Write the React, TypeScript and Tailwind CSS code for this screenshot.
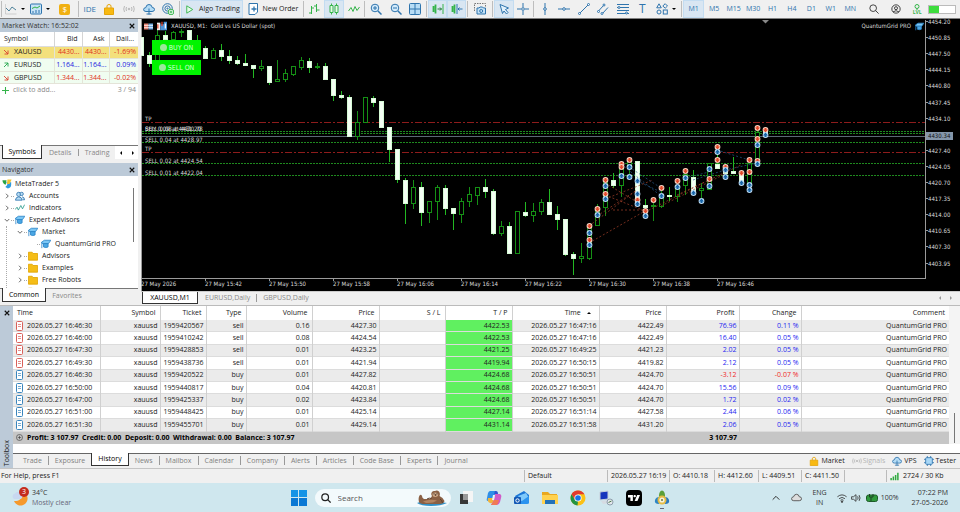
import type { ReactNode } from 'react'
import clsx from 'clsx'
import { SiTradingview } from 'react-icons/si'

// [body top, body bottom, wick top, wick bottom, filled], one bar every 8px
const candles: [number, number, number, number, number][] = [
  [37, 55, 37, 55, 1], [55, 63, 52, 67, 1], [35, 60, 29, 60, 0], [35, 39, 31, 39, 1],
  [32, 39, 31, 41, 0], [31, 32, 29, 37, 0], [30, 42, 30, 42, 1], [40, 50, 35, 52, 1],
  [48, 58, 46, 58, 1], [50, 58, 48, 58, 0], [50, 56, 44, 61, 1], [56, 60, 50, 64, 1],
  [60, 63, 56, 65, 1], [63, 65, 54, 66, 1], [65, 68, 65, 78, 1], [66, 68, 60, 71, 0],
  [66, 82, 66, 85, 1], [79, 81, 60, 81, 0], [73, 79, 69, 82, 0], [66, 74, 66, 76, 0],
  [60, 67, 57, 70, 0], [61, 67, 58, 73, 1], [66, 67, 63, 69, 0], [66, 79, 63, 79, 1],
  [79, 95, 79, 101, 1], [95, 97, 91, 99, 1], [97, 136, 95, 137, 1], [122, 136, 111, 140, 0],
  [97, 122, 97, 122, 0], [98, 102, 96, 107, 1], [101, 127, 101, 127, 1], [127, 149, 127, 162, 1],
  [149, 179, 149, 183, 1], [180, 203, 178, 224, 1], [187, 203, 180, 209, 0], [187, 212, 182, 226, 1],
  [201, 212, 201, 223, 0], [187, 201, 185, 220, 0], [188, 208, 185, 215, 1], [208, 213, 208, 230, 1],
  [201, 214, 198, 223, 0], [194, 201, 187, 207, 0], [187, 195, 187, 205, 0], [187, 191, 179, 198, 1],
  [191, 233, 189, 235, 1], [226, 233, 221, 236, 0], [226, 253, 222, 254, 1], [211, 253, 211, 253, 0],
  [212, 215, 202, 217, 1], [211, 215, 203, 222, 0], [202, 211, 199, 215, 0], [202, 214, 189, 214, 1],
  [214, 219, 206, 230, 1], [219, 254, 219, 256, 1], [254, 258, 252, 275, 1], [256, 258, 243, 263, 0],
  [225, 258, 225, 260, 0], [207, 225, 204, 226, 0], [179, 207, 179, 216, 0], [180, 185, 173, 188, 1],
  [163, 185, 161, 197, 0], [159, 168, 157, 178, 0], [161, 203, 161, 206, 1], [205, 207, 199, 210, 1],
  [205, 206, 199, 221, 0], [195, 206, 190, 208, 0], [195, 196, 187, 201, 1], [185, 196, 182, 202, 0],
  [174, 185, 172, 195, 0], [177, 191, 170, 191, 1], [188, 190, 183, 199, 0], [163, 189, 163, 190, 0],
  [164, 168, 145, 169, 1], [170, 173, 166, 178, 1], [171, 173, 157, 174, 1], [173, 183, 172, 183, 1],
  [163, 185, 158, 188, 0], [132, 163, 130, 165, 0], [131, 135, 129, 137, 1],
]

const marks: [number, string][] = [
  [589, 'r226 b233 r240 b245'], [597, 'r209 b215'], [605, 'r180 b186 r194 b199'],
  [621, 'r164 r167 b176'], [629, 'r160 b167 b177'], [637, 'b181 b194 r200 b204'],
  [645, 'r211 b216'], [653, 'r200'], [661, 'r188 b196'], [677, 'r181 b187'],
  [685, 'r171 b178'], [693, 'b193'], [701, 'b201'], [709, 'b169 r179 b186'],
  [717, 'r147 b152 r160'], [725, 'r167 b170 b177'], [741, 'r173 b183'],
  [749, 'r160 r172 b185 b190'], [757, 'r128 r139 b145 r161 b164'], [765, 'r130 b135'],
]

const prices = [
  '4454.20', '4450.85', '4447.50', '4444.15', '4440.80', '4437.45', '4434.10', '', '4427.40',
  '4424.05', '4420.70', '4417.35', '4414.00', '4410.65', '4407.30', '4403.95',
]

const times = [
  '27 May 2026', '27 May 15:42', '27 May 15:50', '27 May 15:58', '27 May 16:06',
  '27 May 16:14', '27 May 16:22', '27 May 16:30', '27 May 16:38', '27 May 16:46',
]

const levels: [string, number][] = [
  ['TP', 121], ['BUY 0.09 at 4431.20', 131], ['SELL 0.08 at 4430.78', 131], ['SELL 0.04 at 4428.97', 142],
  ['TP', 151], ['SELL 0.02 at 4424.54', 163], ['SELL 0.01 at 4422.04', 175],
]

const deals = [
  ['2026.05.27 16:46:30', '1959420567', 'sell', '0.16', '4427.30', '4422.53', '2026.05.27 16:47:16', '4422.49', '76.96', '0.11 %'],
  ['2026.05.27 16:46:00', '1959410242', 'sell', '0.08', '4424.54', '4422.53', '2026.05.27 16:47:16', '4422.49', '16.40', '0.05 %'],
  ['2026.05.27 16:47:30', '1959428853', 'sell', '0.01', '4423.25', '4421.25', '2026.05.27 16:49:25', '4421.23', '2.02', '0.05 %'],
  ['2026.05.27 16:49:30', '1959438736', 'sell', '0.01', '4421.94', '4419.94', '2026.05.27 16:50:15', '4419.82', '2.12', '0.05 %'],
  ['2026.05.27 16:46:30', '1959420522', 'buy', '0.01', '4427.82', '4424.68', '2026.05.27 16:50:51', '4424.70', '-3.12', '-0.07 %'],
  ['2026.05.27 16:50:00', '1959440817', 'buy', '0.04', '4420.81', '4424.68', '2026.05.27 16:50:51', '4424.70', '15.56', '0.09 %'],
  ['2026.05.27 16:47:00', '1959425337', 'buy', '0.02', '4423.84', '4424.68', '2026.05.27 16:50:51', '4424.70', '1.72', '0.02 %'],
  ['2026.05.27 16:51:00', '1959448425', 'buy', '0.01', '4425.14', '4427.14', '2026.05.27 16:51:14', '4427.58', '2.44', '0.06 %'],
  ['2026.05.27 16:51:30', '1959455701', 'buy', '0.01', '4429.14', '4431.14', '2026.05.27 16:51:58', '4431.20', '2.06', '0.05 %'],
]

const BLUE = '#2f74ad'
const GREEN = '#35b44a'

function Icon({ size = 12, color = BLUE, children }: { size?: number; color?: string; children: ReactNode }) {
  return (
    <svg width={size} height={size} viewBox="0 0 12 12" fill="none" stroke={color} className="shrink-0" aria-hidden="true">
      {children}
    </svg>
  )
}

const Cap = ({ size = 10 }: { size?: number }) => (
  <Icon size={size} color="#2b86c9">
    <path d="M.5 4L4 1.500H11.800L9 5.500H1.500z" fill="#7cc7f5" />
    <path d="M3 5.500V9.500Q6 11 8.500 9.500V5.500z" fill="#4ba7e4" />
    <path d="M1 4V11" />
  </Icon>
)

const Folder = () => (
  <Icon size={10} color="#e0a400">
    <path d="M.5 1.500H5L6 3H11.500V11H.5z" fill="#f5bd16" />
  </Icon>
)

const Bag = ({ size = 12 }: { size?: number }) => (
  <Icon size={size} color="#e5a50a">
    <path d="M1.500 5H10.500V11.500H1.500z" fill="#f8b912" />
    <path d="M4 5V2.500Q6 .2 8 2.500V5" />
  </Icon>
)

const Signal = ({ size = 12 }: { size?: number }) => (
  <Icon size={size} color="#b9b9b9">
    <path d="M1.500 3Q0 6 1.500 9M3.500 4Q2.500 6 3.500 8M8.500 4Q9.500 6 8.500 8M10.500 3Q12 6 10.500 9" />
    <circle cx="6" cy="6" r=".8" fill="#b9b9b9" />
  </Icon>
)

const Cloud = ({ size = 12 }: { size?: number }) => (
  <Icon size={size}>
    <path d="M3 8.500Q.6 8.500.6 6.500.6 4.800 2.800 4.600 3.200 1.500 6 1.500T9.200 4.500Q11.500 4.500 11.500 6.500T9 8.500z" fill="#b5dcf5" />
    <path d="M6 5.500V11.500M3.500 11H8.500" />
  </Icon>
)

const Magnifier = ({ sign }: { sign: string }) => (
  <Icon>
    <circle cx="5" cy="5" r="3.800" fill="#d4ebfb" />
    <path d={sign} />
    <path d="M8 8L11.500 11.500" strokeWidth="1.500" />
  </Icon>
)

function Tool({ label, active, children }: { label: string; active?: boolean; children: ReactNode }) {
  return (
    <button
      aria-label={label}
      className={clsx('flex h-full flex-1 items-center justify-center gap-1', active && 'border border-[#c3dcf1] bg-[#d9e6f2]')}
    >
      {children}
    </button>
  )
}

const Caret = () => <span className="border-x-2 border-t-2 border-x-transparent border-t-black" />
const Sep = () => <span className="mx-px h-4 w-px shrink-0 bg-[#bdbdbd]" />

function Toolbar() {
  return (
    <header className="flex h-[18px] items-center bg-[#f0f0f0] text-[7px] whitespace-nowrap text-[#222]">
      <Sep />
      <div className="flex h-full w-[74px]">
        <Tool label="Line chart">
          <Icon color="#4d8199"><path d="M1 5L4 8 7 4 11 7" /><path d="M.5 1V11H11.500" stroke="#bbb" strokeWidth=".6" /></Icon>
          <Caret />
        </Tool>
        <Tool label="Chart window">
          <Icon><rect x=".5" y="1" width="11" height="10" rx="1" fill="#c8e3f7" /><path d="M2 5.500L5 4 7 5 10 3" stroke={GREEN} /><path d="M3 10V8M6 10V7M9 10V7" /></Icon>
          <Caret />
        </Tool>
        <Tool label="Deposit">
          <span className="flex h-[11px] w-[11px] items-center justify-center rounded-xs bg-[#f0b012] text-[8px] text-white">$</span>
        </Tool>
      </div>
      <Sep />
      <div className="flex h-full w-[98px]">
        <Tool label="MetaEditor"><span className="text-[8px] text-[#2f74ad]">IDE</span></Tool>
        <Tool label="Market"><Bag /></Tool>
        <Tool label="Signals"><Signal /></Tool>
        <Tool label="Virtual hosting"><Cloud /></Tool>
        <Tool label="Community">
          <Icon><circle cx="5.500" cy="5.500" r="4.800" /><circle cx="5.500" cy="5.500" r="2.600" /><circle cx="5.500" cy="5.500" r=".6" /><circle cx="9" cy="9" r="2.800" fill="#fff" stroke={GREEN} /><path d="M9 7.500V10.500M7.500 9H10.500" stroke={GREEN} /></Icon>
        </Tool>
      </div>
      <Sep />
      <div className="flex h-full w-[62px]">
        <Tool label="Algo Trading" active>
          <Icon color={GREEN} size={11}><path d="M3 2V10L9.500 6z" fill="#e7fbe9" /></Icon>
          Algo Trading
        </Tool>
      </div>
      <div className="flex h-full w-[59px]">
        <Tool label="New Order">
          <Icon><path d="M2 .5H10.500V9L8 11.500H2z" fill="#fff" /><path d="M4.500 6H9.500M7 3.500V8.500" strokeWidth="1.300" /></Icon>
          New Order
        </Tool>
      </div>
      <Sep />
      <div className="flex h-full w-[58px]">
        <Tool label="Bar chart"><Icon color={GREEN}><path d="M3.500 3V11M1 10H3.500M3.500 5H6M8.500 1V9M6 3H8.500M8.500 7H11.500" /></Icon></Tool>
        <Tool label="Candles" active><Icon color={GREEN}><path d="M3.500.5V11.500M8.500.5V11.500" /><path d="M2 2.500H5V9.500H2zM7 2.500H10V9.500H7z" fill="#e7fbe9" /></Icon></Tool>
        <Tool label="Line"><Icon color={GREEN}><path d="M.5 8L3 4.500 5 8.500 7 3.500 9 7.500 11.500 4" /></Icon></Tool>
      </div>
      <Sep />
      <div className="flex h-full w-[59px]">
        <Tool label="Zoom in"><Magnifier sign="M3 5H7M5 3V7" /></Tool>
        <Tool label="Zoom out"><Magnifier sign="M3 5H7" /></Tool>
        <Tool label="Tile windows"><Icon><rect x=".5" y=".5" width="11" height="11" rx="1" fill="#b8ddf5" /><path d="M6 .5V11.500M.5 6H11.500" /></Icon></Tool>
      </div>
      <Sep />
      <div className="flex h-full w-[38px]">
        <Tool label="Auto scroll" active><Icon color={GREEN}><path d="M1.500 3V9M3.500 1.500V10.500" strokeWidth="1.800" /><path d="M5.500 6H9.500M8 4.500L9.500 6 8 7.500" stroke="#247c36" /><path d="M11 1V11" /></Icon></Tool>
        <Tool label="Chart shift" active><Icon color={GREEN}><path d="M1.500 3V9M3.500 1.500V10.500" strokeWidth="1.800" /><path d="M11.500 6H7M8.500 4.500L7 6 8.500 7.500M6 1V11" stroke={BLUE} /></Icon></Tool>
      </div>
      <Sep />
      <div className="flex h-full w-[22px]">
        <Tool label="Screenshot"><Icon><path d="M.5 8V.5H11.500V4" stroke="#777" strokeDasharray="1.500 1" /><path d="M3 5H5L6 4H8.500L9.500 5H11.500V11H3z" fill="#c3e1f6" /><circle cx="7.200" cy="8" r="1.500" /></Icon></Tool>
      </div>
      <Sep />
      <div className="flex h-full w-[38px]">
        <Tool label="Cursor" active><Icon><path d="M2 1.500L10.500 5 7.500 6.500 10 9.500 8.500 11 6 8 4.500 10.500z" fill="#e1f1fc" /></Icon></Tool>
        <Tool label="Crosshair"><Icon><path d="M6 0V12M0 6H12" /><rect x="5" y="5" width="2" height="2" fill="#f0f0f0" strokeWidth=".6" /></Icon></Tool>
      </div>
      <Sep />
      <div className="flex h-full w-[117px]">
        <Tool label="Vertical line"><Icon><path d="M6 0V12" /><circle cx="6" cy="6" r="1.300" fill="#fff" /></Icon></Tool>
        <Tool label="Horizontal line"><Icon><path d="M0 6H12" /><circle cx="6" cy="6" r="1.300" fill="#fff" /></Icon></Tool>
        <Tool label="Trendline"><Icon><path d="M1.500 10.500L10.500 1.500" /><circle cx="1.500" cy="10.500" r="1" fill="#fff" /><circle cx="10.500" cy="1.500" r="1" fill="#fff" /></Icon></Tool>
        <Tool label="Channel"><Icon><path d="M1 8.500L7 2M5 11L11 4.500" /><circle cx="1.500" cy="8.500" r="1" fill="#fff" /><circle cx="7" cy="2" r="1" fill="#fff" /><circle cx="5" cy="10.500" r="1" fill="#fff" /></Icon></Tool>
        <Tool label="Fibonacci"><Icon><path d="M0 1.500H12M0 4.500H12M0 7.500H12M0 10.500H12" /><circle cx="9.500" cy="10" r="1" fill="#fff" /><circle cx="2" cy="4.500" r="1" fill="#fff" /></Icon></Tool>
        <Tool label="Text"><span className="text-[12px] leading-3 text-[#2f74ad]">T</span></Tool>
      </div>
      <div className="flex h-full w-[28px]">
        <Tool label="Objects">
          <Icon><path d="M3 .8L5.300 4.800H.7zM6.800 3L9.200.7 11.500 3 9.200 5.200z" /><circle cx="3" cy="9" r="2" /><rect x="7.300" y="7" width="4" height="4" /></Icon>
          <Caret />
        </Tool>
      </div>
      <Sep />
      <div className="flex h-full w-[177px] text-[#2f74ad]">
        {['M1', 'M5', 'M15', 'M30', 'H1', 'H4', 'D1', 'W1', 'MN'].map((tf) => (
          <Tool key={tf} label={tf} active={tf === 'M1'}>
            <span className="w-0 flex-1 text-center">{tf}</span>
          </Tool>
        ))}
      </div>
      <div className="ml-[3px] flex h-full w-[65px]">
        <Tool label="Search"><Icon size={10} color="#222"><circle cx="5" cy="5" r="4" /><path d="M8 8L11.500 11.500" /></Icon></Tool>
        <Tool label="Account"><Icon size={10} color="#222"><circle cx="6" cy="6" r="5" /><circle cx="6" cy="5" r="1.800" /><path d="M2.500 9.500Q6 6.500 9.500 9.500" /></Icon></Tool>
        <Tool label="Level">
          <span className="flex flex-col items-center text-[5px] leading-[5px] font-bold text-[#35b44a]">
            <Icon size={6} color={GREEN}><circle cx="6" cy="5" r="4" strokeWidth="2" /><path d="M6 9V12" strokeWidth="2" /></Icon>
            LVL
          </span>
        </Tool>
      </div>
      <div className="h-[9px] w-7 border border-[#bbb] bg-white">
        <div className="h-full w-2/5 bg-[#3ddc3d]" />
      </div>
    </header>
  )
}

function PanelTitle({ children }: { children: ReactNode }) {
  return (
    <div className="flex h-[13px] items-center justify-between bg-[#bccad8] pr-[3px] pl-[2px] text-[#333]">
      <h2>{children}</h2>
      <button aria-label="Close">
        <Icon size={6} color="#111"><path d="M1.500 1.500L10.500 10.500M10.500 1.500L1.500 10.500" strokeWidth="2.200" /></Icon>
      </button>
    </div>
  )
}

const activeTab = 'border border-t-0 border-[#333] bg-white text-black'

function MarketWatch() {
  const rows = [
    ['XAUUSD', '4430...', '4430...', '-1.69%'],
    ['EURUSD', '1.164...', '1.164...', '0.09%'],
    ['GBPUSD', '1.344...', '1.344...', '-0.02%'],
  ]
  return (
    <section className="flex flex-1 flex-col">
      <PanelTitle>Market Watch: 16:52:02</PanelTitle>
      <div className="flex-1 bg-white">
        <table className="h-16 w-full table-fixed text-right">
          <thead>
            <tr className="h-[14px] border-b border-[#ddd]">
              <th className="w-[54px] border-r border-[#d5d5d5] pl-1 text-left font-normal">Symbol</th>
              <th className="w-[28px] border-r border-[#d5d5d5] pr-1 font-normal">Bid</th>
              <th className="w-[27px] border-r border-[#d5d5d5] pr-1 font-normal">Ask</th>
              <th className="pr-1 font-normal">Dail...</th>
            </tr>
          </thead>
          <tbody>
            {rows.map(([symbol, bid, ask, daily], i) => {
              const up = symbol === 'EURUSD'
              return (
                <tr key={symbol} className={clsx('border-b border-[#e4e4d8]', i === 0 ? 'bg-[#f3e07c]' : 'bg-[#f0fdf0]', up ? 'text-[#2222e0]' : 'text-[#e0301e]')}>
                  <td className="border-r border-[#e4e4d8] pl-[3px] text-[#222]">
                    <span className="flex items-center gap-[5px]">
                      <Icon size={6} color={up ? '#1fa54a' : '#d8402c'}>
                        <path d={up ? 'M2 10L10 2M3 2H10V9' : 'M2 2L10 10M10 3V10H3'} strokeWidth="1.800" />
                      </Icon>
                      {symbol}
                    </span>
                  </td>
                  <td className="border-r border-[#e4e4d8] pr-[2px]">{bid}</td>
                  <td className="border-r border-[#e4e4d8] pr-[2px]">{ask}</td>
                  <td className="pr-[2px]">{daily}</td>
                </tr>
              )
            })}
            <tr className="text-[#888]">
              <td colSpan={2} className="pl-[2px] text-left">
                <span className="flex items-center gap-1">
                  <Icon size={7} color={GREEN}><path d="M6 0V12M0 6H12" strokeWidth="1.800" /></Icon>
                  click to add...
                </span>
              </td>
              <td colSpan={2} className="pr-[2px]">3 / 94</td>
            </tr>
          </tbody>
        </table>
      </div>
      <nav className="flex h-[14px] items-stretch border-t border-[#777] text-[#888]">
        <button className={clsx('-mt-px ml-[2px] w-[41px]', activeTab)}>Symbols</button>
        <button className="w-9">Details</button>
        <span className="my-[3px] w-px bg-[#999]" />
        <button className="w-[37px]">Trading</button>
        <button aria-label="Previous tabs" className="flex w-3 items-center justify-center bg-white">
          <span className="border-y-2 border-r-2 border-y-transparent border-r-black" />
        </button>
        <button aria-label="Next tabs" className="flex w-[11px] items-center justify-center bg-white">
          <span className="border-y-2 border-l-2 border-y-transparent border-l-black" />
        </button>
      </nav>
    </section>
  )
}

function TreeItem({ icon, open, leaf, children }: { icon: ReactNode; open?: boolean; leaf?: boolean; children?: ReactNode }) {
  return (
    <div className="flex h-3 items-center">
      <span className="flex w-[9px] justify-center">
        {!leaf && (
          <Icon size={6} color="#444">
            <path d={open ? 'M1.500 4L6 8.500 10.500 4' : 'M4 1.500L8.500 6 4 10.500'} strokeWidth="1.600" />
          </Icon>
        )}
      </span>
      <span className="mr-px w-[3px] border-t border-dotted border-[#aaa]" />
      {icon}
      <span className="ml-1 whitespace-nowrap">{children}</span>
    </div>
  )
}

function Navigator() {
  return (
    <section className="mt-1 flex h-[139px] flex-col">
      <PanelTitle>Navigator</PanelTitle>
      <div className="flex min-h-0 flex-1 justify-between overflow-hidden bg-white pt-[2px] pr-1 leading-3">
        <div>
          <div className="flex h-3 items-center gap-[3px] pl-[2px]">
            <Icon size={10}>
              <path d="M.5 1.500H5.500L4.500 7Q1 6 .5 1.500z" fill="#27a343" stroke="none" />
              <path d="M5 4H11V7Q11 11 7 11.500L4 9.500 6.500 7z" fill="#2e9be0" stroke="none" />
              <path d="M6.500.5H11.500L9 6H6z" fill="#f2c230" stroke="none" />
            </Icon>
            MetaTrader 5
          </div>
          <div className="pl-[2px]">
            <TreeItem icon={<Icon size={10}><circle cx="4.500" cy="4" r="2.500" fill="#b8ddf5" /><circle cx="8" cy="3.500" r="2" fill="#b8ddf5" /><path d="M.5 11Q1 7 4.500 7T8.500 11zM8.500 7Q11 7 11.500 10.500H9" fill="#b8ddf5" /></Icon>}>Accounts</TreeItem>
            <TreeItem icon={<Icon size={10} color="#2a9a8c"><path d="M0 8L2.500 5 4 8.500 7 3 9 7 11.500 2" /></Icon>}>Indicators</TreeItem>
            <TreeItem open icon={<Cap />}>Expert Advisors</TreeItem>
            <div className="ml-1 border-l border-dotted border-[#aaa] pl-2">
              <TreeItem open icon={<Cap />}>Market</TreeItem>
              <div className="ml-[13px]"><TreeItem leaf icon={<Cap />}>QuantumGrid PRO</TreeItem></div>
              <TreeItem icon={<Folder />}>Advisors</TreeItem>
              <TreeItem icon={<Folder />}>Examples</TreeItem>
              <TreeItem icon={<Folder />}>Free Robots</TreeItem>
              <TreeItem leaf icon={<Folder />} />
            </div>
          </div>
        </div>
        <span className="mt-[10px] h-[54px] w-px bg-[#777]" />
      </div>
      <nav className="flex h-[14px] border-t border-[#777] text-[#888]">
        <button className={clsx('-mt-px ml-[2px] w-11', activeTab)}>Common</button>
        <button className="w-[42px]">Favorites</button>
      </nav>
    </section>
  )
}

function Mark({ x, y, red }: { x: number; y: number; red: boolean }) {
  return (
    <g>
      <circle cx={x} cy={y} r="2.900" fill={red ? '#f9d3c2' : '#bcdcf5'} />
      <path
        d={red ? 'M-1 -2H1V-.5H2.500L0 2.500 -2.500 -.5H-1z' : 'M-1 2H1V.5H2.500L0 -2.500 -2.500 .5H-1z'}
        transform={`translate(${x} ${y})`}
        fill={red ? '#e2482a' : '#1765a8'}
      />
    </g>
  )
}

function Chart() {
  return (
    <div className="relative bg-black font-['DejaVu_Sans_Condensed','DejaVu_Sans',sans-serif]">
      <svg viewBox="141 19 819 272" className="block w-full text-[6px]" role="img" aria-label="XAUUSD M1 chart">
        <rect x="141" y="19" width="819" height="272" fill="#000" />
        <g strokeWidth="1" shapeRendering="crispEdges">
          <path d="M142 122.500H925M142 152.500H925" stroke="#8e1c1c" strokeDasharray="7 2 2 2" />
          <path d="M142 131.500H925M142 133.500H925M142 142.500H925M142 163.500H925M142 175.500H925" stroke="#1f8a1f" strokeDasharray="2 1" />
          <path d="M142 136.500H925" stroke="#5d6876" />
          <path d="M141.500 19V291M142 278.500H925.500V20" stroke="#9a9a9a" fill="none" />
        </g>
        <g shapeRendering="crispEdges">
          {candles.map(([top, bottom, high, low, filled], i) => {
            const x = 141.5 + i * 8
            return (
              <g key={i} stroke={filled ? '#22b822' : '#159015'}>
                <path d={`M${x} ${high}V${low}`} />
                <rect
                  x={x - 2}
                  y={top + 0.5}
                  width="4"
                  height={bottom - top}
                  fill={filled ? '#f4fff4' : '#000'}
                  stroke={filled ? '#d6fbd6' : '#159015'}
                />
              </g>
            )
          })}
        </g>
        <g fill="none" strokeDasharray="2 2" strokeWidth=".7">
          <path d="M589 243L645 211M597 216L637 190M605 199L653 180M605 183L637 202M605 195L645 211M613 210L645 210M589 226L637 190M661 206L725 174M645 212L709 180M677 195L741 165" stroke="#a5402a" />
          <path d="M621 164L661 196M629 167L661 188M637 181L661 192M693 180L725 170M717 150L749 160M685 178L709 172M725 170L757 163" stroke="#285a8c" />
        </g>
        {marks.map(([x, list]) =>
          list.split(' ').map((m) => <Mark key={x + m} x={x + 0.5} y={Number(m.slice(1))} red={m[0] === 'r'} />)
        )}
        <path d="M762 20H769L765.500 23.500z" fill="#888" />
        <g fill="#dcdcdc">
          {levels.map(([label, y], i) => (
            <text key={i} x="145" y={y}>{label}</text>
          ))}
          {prices.map((price, i) => (
            <g key={i}>
              <path d={`M925 ${Math.round(21 + i * 16.1) + 0.5}h3`} stroke="#9a9a9a" />
              <text x="928" y={Math.round(24 + i * 16.1)}>{price}</text>
            </g>
          ))}
          {times.map((time, i) => (
            <g key={time}>
              <path d={`M${141.5 + i * 64} 278v3`} stroke="#9a9a9a" />
              <text x={141 + i * 64} y="286">{time}</text>
            </g>
          ))}
        </g>
        <rect x="926" y="132" width="27" height="8" fill="#8496aa" />
        <text x="928" y="138" fill="#111">4430.34</text>
      </svg>
      <div className="absolute top-[2px] right-[36px] left-[3px] flex items-center gap-1 text-[6px] leading-[10px] text-[#dcdcdc]">
        <Icon size={9}><path d="M0 2H6V10H0z" fill="#e88070" stroke="none" /><path d="M6 2H12V10H6z" fill="#6ba8e0" stroke="none" /><path d="M0 4.500H12M0 7.500H12" stroke="#fff" /></Icon>
        <Icon size={10}><path d="M0 2H4V11H0z" fill="#f2f2f2" stroke="none" /><path d="M4 4H8V11H4zM8 1H12V11H8z" fill="#4f94d8" stroke="none" /><path d="M1 4V9M6 1V6" stroke="#e2442e" strokeWidth="1.500" /><path d="M10 3V9" stroke="#fff" strokeWidth="1.500" /></Icon>
        <span className="flex-1">XAUUSD, M1:&nbsp; Gold vs US Dollar (spot)</span>
        <span>QuantumGrid PRO</span>
        <Cap size={9} />
      </div>
      <div className="absolute top-[21px] left-[11px] flex w-[49px] flex-col gap-[5px] text-[7px] text-[#d5ffd5]">
        {['BUY ON', 'SELL ON'].map((label) => (
          <button key={label} className="flex h-[15px] items-center justify-center gap-[2px] bg-[#00f400]">
            <span className="size-[7px] rounded-full bg-[#9be89b]" />
            {label}
          </button>
        ))}
      </div>
    </div>
  )
}

function Toolbox() {
  const cell = 'border-r border-[#d0d0d0] pr-[2px]'
  const head = 'border-r border-[#d0d0d0] pr-1 font-normal'
  const tabs = ['Trade', 'Exposure', 'History', 'News', 'Mailbox', 'Calendar', 'Company', 'Alerts', 'Articles', 'Code Base', 'Experts', 'Journal']
  return (
    <section className="flex border-t border-[#bbb] bg-[#f0f0f0]">
      <div className="flex w-[13px] shrink-0 flex-col items-center justify-between bg-[#bccad8] pt-1 pb-[2px]">
        <button aria-label="Close">
          <Icon size={6} color="#111"><path d="M1.500 1.500L10.500 10.500M10.500 1.500L1.500 10.500" strokeWidth="2.200" /></Icon>
        </button>
        <h2 className="rotate-180 [writing-mode:vertical-rl]">Toolbox</h2>
      </div>
      <div className="min-w-0 flex-1">
        <div className="flex bg-white">
          <table className="h-[138px] w-full table-fixed text-right text-[7px] leading-[10px] text-[#222]">
            <thead>
              <tr className="h-[14px]">
                <th className="w-[87px] border-r border-[#d0d0d0] pl-1 text-left font-normal">Time</th>
                <th className={clsx('w-[60px]', head)}>Symbol</th>
                <th className={clsx('w-[46px]', head)}>Ticket</th>
                <th className={clsx('w-10', head)}>Type</th>
                <th className={clsx('w-[66px]', head)}>Volume</th>
                <th className={clsx('w-[67px]', head)}>Price</th>
                <th className={clsx('w-[66px]', head)}>S / L</th>
                <th className={clsx('w-[67px]', head)}>T / P</th>
                <th className={clsx('w-[87px]', head)}>
                  Time <span className="mx-1 inline-block border-x-2 border-b-2 border-x-transparent border-b-black align-middle" />
                </th>
                <th className={clsx('w-[67px]', head)}>Price</th>
                <th className={clsx('w-[73px]', head)}>Profit</th>
                <th className={clsx('w-[62px]', head)}>Change</th>
                <th className="pr-1 font-normal">Comment</th>
              </tr>
            </thead>
            <tbody>
              {deals.map(([time, ticket, type, volume, price, tp, closed, closePrice, profit, change]) => {
                const money = profit.startsWith('-') ? 'text-[#f02828]' : 'text-[#2626f0]'
                const ink = type === 'sell' ? '#d9605a' : '#3a85bd'
                return (
                  <tr key={ticket} className="border-b border-[#dcdcdc] odd:bg-[#ebebeb]">
                    <td className="border-r border-[#d0d0d0] pl-[3px] text-left">
                      <span className="flex items-center gap-1">
                        <svg width="7" height="10" viewBox="0 0 7 10" fill="#fff" stroke={ink} aria-hidden="true">
                          <rect x=".5" y=".5" width="6" height="9" rx="1" />
                          <path d="M2 3.500H5M2 5.500H5" strokeWidth=".7" />
                        </svg>
                        {time}
                      </span>
                    </td>
                    <td className={cell}>xauusd</td>
                    <td className={cell}>{ticket}</td>
                    <td className={cell}>{type}</td>
                    <td className={cell}>{volume}</td>
                    <td className={cell}>{price}</td>
                    <td className={cell} />
                    <td className={clsx(cell, 'bg-[#60f060]')}>{tp}</td>
                    <td className={cell}>{closed}</td>
                    <td className={cell}>{closePrice}</td>
                    <td className={clsx(cell, money)}>{profit}</td>
                    <td className={clsx(cell, money)}>{change}</td>
                    <td className="pr-[2px]">QuantumGrid PRO</td>
                  </tr>
                )
              })}
            </tbody>
            <tfoot>
              <tr className="h-[13px] bg-[#c6c6c6] font-bold text-black">
                <td colSpan={10} className="pl-[3px] text-left">
                  <span className="flex items-center gap-1 whitespace-pre">
                    <Icon size={7} color="#333"><circle cx="6" cy="6" r="5.200" /><path d="M6 3V9M3 6H9" /></Icon>
                    {'Profit: 3 107.97  Credit: 0.00  Deposit: 0.00  Withdrawal: 0.00  Balance: 3 107.97'}
                  </span>
                </td>
                <td className="pr-[2px]">3 107.97</td>
                <td colSpan={2} />
              </tr>
            </tfoot>
          </table>
          <div className="flex w-[11px] shrink-0 flex-col items-center justify-end bg-[#f4f4f4] pb-px">
            <span className="h-[30px] w-px bg-[#777]" />
          </div>
        </div>
        <div className="h-[9px] bg-white" />
        <nav className="flex h-[15px] items-start border-t border-[#666] pl-1 text-[7px] text-[#808080]">
          {tabs.map((tab, i) => (
            <button
              key={tab}
              className={clsx(
                'px-[6px]',
                tab === 'History'
                  ? '-mt-px h-[13px] border border-t-0 border-[#333] bg-white text-black'
                  : 'mt-[2px] h-[9px] leading-[9px]',
                i !== 1 && i !== 2 && i < 11 && 'border-r border-r-[#999]'
              )}
            >
              {tab}
            </button>
          ))}
          <div className="mt-[2px] ml-auto flex items-center gap-[7px] pr-1 text-[#222]">
            <a href="#market" className="flex items-center gap-[2px]"><Bag size={10} />Market</a>
            <a href="#signals" className="flex items-center gap-px text-[#b5b5b5]"><Signal size={10} />Signals</a>
            <a href="#vps" className="flex items-center gap-[2px]"><Cloud size={10} />VPS</a>
            <a href="#tester" className="flex items-center gap-[2px]">
              <Icon size={10}><path d="M4 0V12M8 0V12M0 4H12M0 8H12" /><rect x="2" y="2" width="8" height="8" rx="1" fill="#a9d8f7" /></Icon>
              Tester
            </a>
          </div>
        </nav>
      </div>
    </section>
  )
}

function StatusBar() {
  const cell = 'flex h-3 items-center border-l border-[#bbb] pl-[3px]'
  return (
    <footer className="flex h-[15px] items-center border-t border-[#c4c4c4] bg-[#f0f0f0] text-[7px] whitespace-nowrap text-[#222]">
      <span className="flex-1 pl-px">For Help, press F1</span>
      <span className={clsx(cell, 'w-[83px]')}>Default</span>
      <span className={clsx(cell, 'w-[62px]')}>2026.05.27 16:19</span>
      <span className={clsx(cell, 'w-[45px]')}>O: 4410.18</span>
      <span className={clsx(cell, 'w-11')}>H: 4412.60</span>
      <span className={clsx(cell, 'w-[43px]')}>L: 4409.51</span>
      <span className={clsx(cell, 'w-[43px]')}>C: 4411.50</span>
      <span className={clsx(cell, 'w-[42px]')} />
      <span className={clsx(cell, 'w-[74px] gap-1')}>
        <Icon size={9} color="#2faa3f"><path d="M1.500 11V8M4.500 11V6M7.500 11V4M10.500 11V1" strokeWidth="2" /></Icon>
        2724 / 30 Kb
      </span>
    </footer>
  )
}

function Taskbar() {
  return (
    <footer className="flex h-[29px] items-center justify-between bg-[#cfe7ee] text-[8px] leading-[10px] text-[#333]">
      <div className="flex w-[292px] items-center gap-1 pl-3">
        <div className="relative size-4">
          <svg width="16" height="16" viewBox="0 0 16 16" aria-hidden="true">
            <path d="M11 2A7 7 0 1 1 2 11 8 8 0 0 0 11 2z" fill="#f5992b" />
            <path d="M2 9A3 3 0 0 1 3 3.500 3.500 3.500 0 0 1 9 4Q12 6 9 9z" fill="#c8d8f0" />
          </svg>
          <span className="absolute -top-[3px] left-[7px] flex size-[10px] items-center justify-center rounded-full bg-[#c42b1c] text-[7px] text-white">3</span>
        </div>
        <p className="text-[7px]">
          34°C
          <br />
          <span className="text-[#667]">Mostly clear</span>
        </p>
      </div>
      <div className="flex items-center">
        <button aria-label="Start" className="mr-2 grid size-4 grid-cols-2 gap-px">
          <span className="bg-[#1493e6]" /><span className="bg-[#1493e6]" /><span className="bg-[#0a78d4]" /><span className="bg-[#0a78d4]" />
        </button>
        <label className="flex h-[18px] w-[136px] items-center gap-[7px] rounded-full bg-[#f3fafc] pr-1 pl-[6px]">
          <Icon size={10} color="#222"><circle cx="5" cy="5" r="4" strokeWidth="1.500" /><path d="M8 8L11.500 11.500" strokeWidth="1.500" /></Icon>
          <input aria-label="Search" placeholder="Search" className="min-w-0 flex-1 bg-transparent outline-none placeholder:text-[#555]" />
          <svg width="30" height="16" viewBox="0 0 30 16" aria-hidden="true">
            <path d="M0 13Q6 10 15 11T30 13Q24 16 14 16T0 13z" fill="#3191c7" />
            <path d="M2 12Q1 8 2.500 5.500 4 4 5 6 5 8 7 9L13 9 15 6Q13.500 4 15 2 16 .5 18 1 20 -.2 22 1.500 23.500 3.500 22.500 6 26 7.500 27.500 11 27 14 22 14H8Q3 14 2 12z" fill="#8a6044" />
            <path d="M15.500 3.500Q18 1.500 21 3.500 22 6.500 18.500 7 15 7 15.500 3.500z" fill="#cfaa88" />
            <path d="M6 11.500Q13 8.500 20 10.500 16 13.500 9 13z" fill="#b28461" />
            <path d="M23 9Q25 10 25.500 13M10 9Q12 7.500 14.500 8.500" stroke="#5d3d2a" fill="none" />
            <circle cx="17" cy="3.800" r=".6" fill="#222" /><circle cx="20" cy="3.800" r=".6" fill="#222" /><circle cx="18.500" cy="5" r=".8" fill="#3a231c" />
          </svg>
        </label>
        <div className="ml-[7px] flex items-center gap-[12px]">
          <button aria-label="Task view">
            <svg width="16" height="16" viewBox="0 0 16 16"><path d="M5 1H15V12H5z" fill="#f5f5f5" /><path d="M2 4H10V14H2z" fill="#383838" /><path d="M5 4H10V10H5z" fill="#999" /></svg>
          </button>
          <button aria-label="Copilot">
            <svg width="16" height="16" viewBox="0 0 16 16">
              <path d="M4 1H10L7 11H2Q0 11 1 8L2 3Q3 1 4 1z" fill="#2f8ee8" />
              <path d="M2 8H8L7 12Q6 14 4 13 1 12 2 8z" fill="#f0b43c" />
              <path d="M10 1Q12 1 12 4H8L9 1z" fill="#3054cf" />
              <path d="M9 4H14Q16 5 15 8L14 12Q13 15 11 15H5L8 10z" fill="#d15bc8" />
              <path d="M5 15L8 10H13Q12 15 10 15z" fill="#f07a55" />
              <path d="M7 5H9L8 10H6z" fill="#e7f4f7" />
            </svg>
          </button>
          <button aria-label="Outlook">
            <svg width="16" height="16" viewBox="0 0 16 16"><path d="M1 6L10 1 15 5V13H4z" fill="#1b76d6" /><path d="M4 6L12 3 15 8 8 12z" fill="#7ec9fb" /><path d="M5 13L15 6V13Q15 14 13 14H5z" fill="#2b93ef" /><rect y="7" width="7" height="7" rx="1" fill="#1258b5" /><circle cx="3.500" cy="10.500" r="1.700" fill="none" stroke="#fff" /></svg>
          </button>
          <button aria-label="File Explorer">
            <svg width="16" height="16" viewBox="0 0 16 16"><path d="M0 2H6L8 4H15V14H0z" fill="#e9a820" /><path d="M0 5H16V14H0z" fill="#ffd24f" /><path d="M3 10H13V14H3z" fill="#2272b9" /></svg>
          </button>
          <button aria-label="Chrome">
            <svg width="16" height="16" viewBox="0 0 16 16"><circle cx="8" cy="8" r="7.500" fill="#fbc116" /><path d="M1.500 4.200A7.500 7.500 0 0 1 14.500 4.300H8L4.800 9.800z" fill="#e33b2e" /><path d="M1.500 4.300L4.800 9.800 8 11.500 7.500 15.500A7.500 7.500 0 0 1 1.500 4.300z" fill="#229342" /><circle cx="8" cy="8" r="3.600" fill="#fff" /><circle cx="8" cy="8" r="2.800" fill="#1a73e8" /></svg>
          </button>
          <button aria-label="Remote Desktop">
            <svg width="16" height="16" viewBox="0 0 16 16"><path d="M2 2L10 1V9L2 10z" fill="#1634bd" stroke="#c7cfdb" /><path d="M3 11L10 10 12 13 5 14z" fill="#d5dbe2" /><circle cx="12" cy="12" r="3" fill="#e3e7eb" stroke="#8fa0ae" /><path d="M10.500 12.500L13.500 11" stroke="#4a7a4a" /></svg>
          </button>
          <button aria-label="TradingView" className="flex size-4 items-center justify-center rounded-sm bg-black">
            <SiTradingview size={12} color="#fff" />
          </button>
          <button aria-label="MetaTrader" className="relative">
            <svg width="16" height="16" viewBox="0 0 16 16"><path d="M8 .5Q11 1 11 6V10H5V6Q5 1 8 .5z" fill="#5b9f3a" /><path d="M1 10Q2 7 5 7V14Q0 14 1 10z" fill="#2e86c5" /><path d="M15 10Q14 7 11 7V14Q16 14 15 10z" fill="#2a78c0" /><circle cx="8" cy="10" r="4.500" fill="#e6bc45" /><circle cx="8" cy="10" r="2.600" fill="#f7f2de" /><circle cx="8" cy="10" r="1" fill="#6a7b3e" /></svg>
            <span className="absolute -bottom-[3px] left-[6px] h-px w-1 bg-[#667]" />
          </button>
        </div>
      </div>
      <div className="flex w-[292px] items-center justify-end pr-3">
        <button aria-label="Hidden icons" className="mr-[11px]"><Icon size={8} color="#333"><path d="M1 8.500L6 3.500 11 8.500" strokeWidth="1.500" /></Icon></button>
        <Icon size={11} color="#555"><path d="M3 9.500Q.6 9.500.6 7.300.6 5.500 2.800 5.200 3.500 2.500 6 2.500T9 5.200Q11.500 5.200 11.500 7.300T9 9.500z" fill="#ddd" /></Icon>
        <p className="mx-[10px] text-center text-[7px]">
          ENG
          <br />
          IN
        </p>
        <Icon size={10} color="#333"><path d="M.5 4.500Q6 0 11.500 4.500M2.500 6.800Q6 3.800 9.500 6.800M4.200 8.800Q6 7.300 7.800 8.800" /><circle cx="6" cy="10.500" r=".8" fill="#333" /></Icon>
        <span className="ml-1"><Icon size={10} color="#333"><path d="M.7 4.500H3L6 2V10L3 7.500H.7zM8 4Q9 6 8 8M9.700 2.500Q12 6 9.700 9.500" /></Icon></span>
        <svg width="13" height="10" viewBox="0 0 13 10" className="ml-[5px]" aria-hidden="true"><rect x=".5" y="2" width="11" height="6.500" rx="2" fill="#2f9a3d" stroke="#1d5b28" /><path d="M3.500 1V4H7V1M5 4V8" stroke="#1d4324" fill="none" /></svg>
        <span className="ml-[2px] text-[7px]">100%</span>
        <p className="ml-[13px] text-right text-[7px]">
          07:22 PM
          <br />
          27-05-2026
        </p>
      </div>
    </footer>
  )
}

export default function App() {
  return (
    <div className="flex flex-col bg-[#f0f0f0] font-['Open_Sans',sans-serif] text-[7px] leading-[10px] text-[#222]">
      <Toolbar />
      <div className="flex border-t border-[#808080]">
        <aside className="mr-[3px] flex w-[138px] shrink-0 flex-col pb-[3px]">
          <MarketWatch />
          <Navigator />
        </aside>
        <main className="min-w-0 flex-1">
          <Chart />
          <nav className="flex h-[14px] items-center border-t border-[#ccc] pb-[2px] text-[#888]">
            <button className={clsx('ml-px h-3 w-[56px] self-start', activeTab)}>XAUUSD,M1</button>
            <button className="ml-[7px]">EURUSD,Daily</button>
            <span className="mx-[6px] h-2 w-px bg-[#999]" />
            <button>GBPUSD,Daily</button>
            <div className="ml-auto flex gap-[9px] pr-2">
              <span className="border-y-2 border-r-2 border-y-transparent border-r-[#999]" />
              <span className="border-y-2 border-l-2 border-y-transparent border-l-[#999]" />
            </div>
          </nav>
        </main>
      </div>
      <Toolbox />
      <StatusBar />
      <Taskbar />
    </div>
  )
}
